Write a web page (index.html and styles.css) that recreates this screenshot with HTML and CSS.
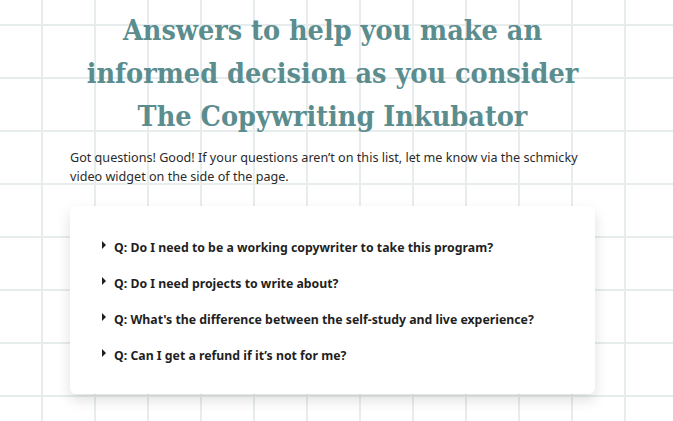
FILE: index.html
```html
<!DOCTYPE html>
<html lang="en">
<head>
  <meta charset="UTF-8">
  <meta name="viewport" content="width=device-width, initial-scale=1.0">
  <title>FAQ - The Copywriting Inkubator</title>
  <link rel="stylesheet" href="styles.css">
</head>
<body>

<div class="page">
  <h1>Answers to help you make an informed decision as you consider The Copywriting Inkubator</h1>
  <p class="intro">Got questions! Good! If your questions aren’t on this list, let me know via the schmicky video widget on the side of the page.</p>

  <div class="faq-card">
    <details class="faq-item">
      <summary>Q: Do I need to be a working copywriter to take this program?</summary>
    </details>
    <details class="faq-item">
      <summary>Q: Do I need projects to write about?</summary>
    </details>
    <details class="faq-item">
      <summary>Q: What's the difference between the self-study and live experience?</summary>
    </details>
    <details class="faq-item">
      <summary>Q: Can I get a refund if it’s not for me?</summary>
    </details>
  </div>
</div>

</body>
</html>
```

FILE: styles.css
```css
body {
  margin: 0;
  padding: 0;
  font-family: "Noto Sans", sans-serif;
  background-color: #fff;
  background-image:
    linear-gradient(to right, #e7eced 2px, transparent 2px),
    linear-gradient(to bottom, #e7eced 2px, transparent 2px);
  background-size: 53px 53px;
  background-position: 41px 24px;
  min-height: 421px;
}
.page {
  width: 525px;
  margin: 0 auto;
  padding: 9px 8px 0 0;
}
h1 {
  margin: 0;
  font-family: "DejaVu Serif Condensed", "DejaVu Serif", serif;
  font-stretch: condensed;
  font-weight: bold;
  font-size: 28.5px;
  line-height: 43px;
  color: #5b8d8f;
  text-align: center;
}
.intro {
  margin: 10px 0 0;
  font-size: 12.6px;
  line-height: 19px;
  color: #2b2b2b;
}
.faq-card {
  margin-top: 20px;
  padding: 32px 32px 28px;
  background-color: #fff;
  border-radius: 6px;
  box-shadow: 0 6px 14px rgba(0,0,0,0.13);
}
.faq-item {
  margin-bottom: 16px;
}
.faq-item:last-child {
  margin-bottom: 0;
}
.faq-item summary {
  font-size: 12.3px;
  font-weight: bold;
  line-height: 20px;
  color: #1f1f1f;
  cursor: pointer;
  list-style: none;
  display: flex;
  align-items: flex-start;
}
.faq-item summary::before {
  content: "";
  flex: none;
  width: 0;
  height: 0;
  margin: 3px 8px 0 0;
  border-left: 4px solid #1f1f1f;
  border-top: 4px solid transparent;
  border-bottom: 4px solid transparent;
}
.faq-item summary::-webkit-details-marker {
  display: none;
}
```
